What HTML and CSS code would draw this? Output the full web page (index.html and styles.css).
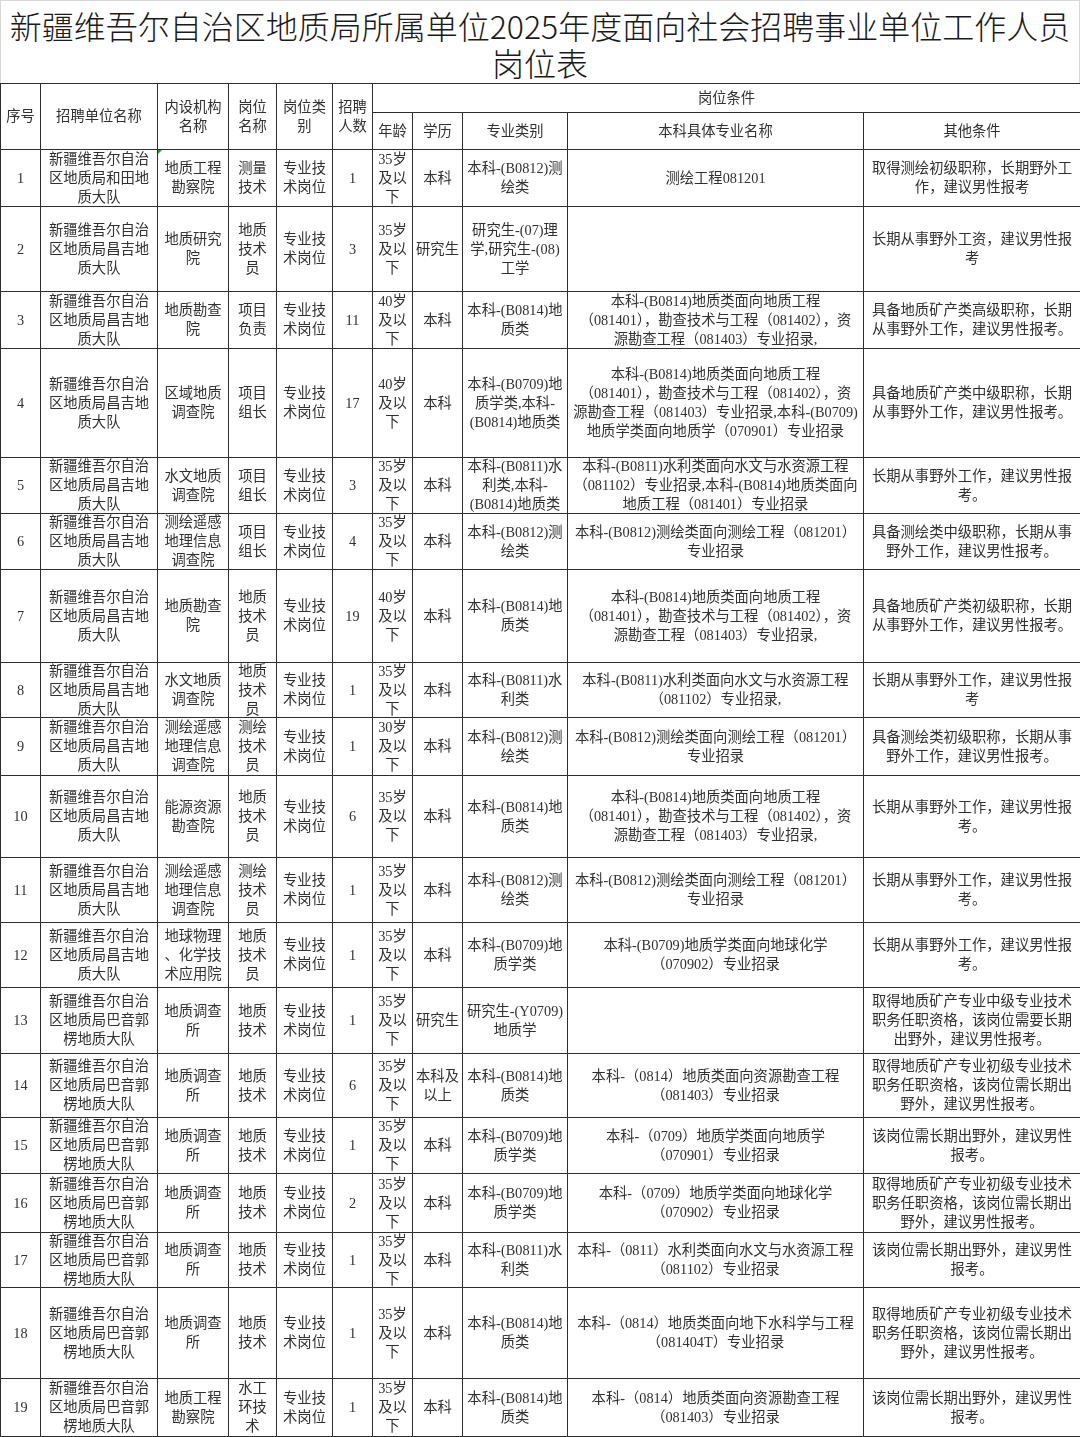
FILE: index.html
```html
<!DOCTYPE html>
<html lang="zh-CN">
<head>
<meta charset="utf-8">
<title>岗位表</title>
<link rel="stylesheet" href="styles.css">
</head>
<body>
<div class="title">新疆维吾尔自治区地质局所属单位2025年度面向社会招聘事业单位工作人员<br>岗位表</div>
<table class="t">
<colgroup>
<col class="w40"><col class="w117"><col class="w71"><col class="w48"><col class="w56"><col class="w40"><col class="w40"><col class="w50"><col class="w105"><col class="w296"><col class="w217">
</colgroup>
<thead>
<tr class="hd1">
<th rowspan="2"><div class="hc"><p>序号</p></div></th>
<th rowspan="2"><div class="hc"><p>招聘单位名称</p></div></th>
<th rowspan="2"><div class="hc"><p>内设机构<br>名称</p></div></th>
<th rowspan="2"><div class="hc"><p>岗位<br>名称</p></div></th>
<th rowspan="2"><div class="hc"><p>岗位类<br>别</p></div></th>
<th rowspan="2"><div class="hc"><p>招聘<br>人数</p></div></th>
<th colspan="5"><div><p>岗位条件</p></div></th>
</tr>
<tr class="hd2">
<th><div><p>年龄</p></div></th>
<th><div><p>学历</p></div></th>
<th><div><p>专业类别</p></div></th>
<th><div><p>本科具体专业名称</p></div></th>
<th><div><p>其他条件</p></div></th>
</tr>
</thead>
<tbody>
<tr class="r57">
<td><div><p>1</p></div></td>
<td><div><p>新疆维吾尔自治<br>区地质局和田地<br>质大队</p></div></td>
<td><div class="marked"><i class="mark"></i><p>地质工程<br>勘察院</p></div></td>
<td><div><p>测量<br>技术</p></div></td>
<td><div><p>专业技<br>术岗位</p></div></td>
<td><div><p>1</p></div></td>
<td><div><p>35岁<br>及以<br>下</p></div></td>
<td><div><p>本科</p></div></td>
<td><div><p>本科-(B0812)测<br>绘类</p></div></td>
<td><div><p>测绘工程081201</p></div></td>
<td><div><p>取得测绘初级职称，长期野外工<br>作，建议男性报考</p></div></td>
</tr>
<tr class="r85">
<td><div><p>2</p></div></td>
<td><div><p>新疆维吾尔自治<br>区地质局昌吉地<br>质大队</p></div></td>
<td><div><p>地质研究<br>院</p></div></td>
<td><div><p>地质<br>技术<br>员</p></div></td>
<td><div><p>专业技<br>术岗位</p></div></td>
<td><div><p>3</p></div></td>
<td><div><p>35岁<br>及以<br>下</p></div></td>
<td><div><p>研究生</p></div></td>
<td><div><p>研究生-(07)理<br>学,研究生-(08)<br>工学</p></div></td>
<td><div><p></p></div></td>
<td><div><p>长期从事野外工资，建议男性报<br>考</p></div></td>
</tr>
<tr class="r57">
<td><div><p>3</p></div></td>
<td><div><p>新疆维吾尔自治<br>区地质局昌吉地<br>质大队</p></div></td>
<td><div><p>地质勘查<br>院</p></div></td>
<td><div><p>项目<br>负责</p></div></td>
<td><div><p>专业技<br>术岗位</p></div></td>
<td><div><p>11</p></div></td>
<td><div><p>40岁<br>及以<br>下</p></div></td>
<td><div><p>本科</p></div></td>
<td><div><p>本科-(B0814)地<br>质类</p></div></td>
<td><div><p>本科-(B0814)地质类面向地质工程<br>（081401），勘查技术与工程（081402），资<br>源勘查工程（081403）专业招录,</p></div></td>
<td><div><p>具备地质矿产类高级职称，长期<br>从事野外工作，建议男性报考。</p></div></td>
</tr>
<tr class="r109">
<td><div><p>4</p></div></td>
<td><div><p>新疆维吾尔自治<br>区地质局昌吉地<br>质大队</p></div></td>
<td><div><p>区域地质<br>调查院</p></div></td>
<td><div><p>项目<br>组长</p></div></td>
<td><div><p>专业技<br>术岗位</p></div></td>
<td><div><p>17</p></div></td>
<td><div><p>40岁<br>及以<br>下</p></div></td>
<td><div><p>本科</p></div></td>
<td><div><p>本科-(B0709)地<br>质学类,本科-<br>(B0814)地质类</p></div></td>
<td><div><p>本科-(B0814)地质类面向地质工程<br>（081401），勘查技术与工程（081402），资<br>源勘查工程（081403）专业招录,本科-(B0709)<br>地质学类面向地质学（070901）专业招录</p></div></td>
<td><div><p>具备地质矿产类中级职称，长期<br>从事野外工作，建议男性报考。</p></div></td>
</tr>
<tr class="r56">
<td><div><p>5</p></div></td>
<td><div><p>新疆维吾尔自治<br>区地质局昌吉地<br>质大队</p></div></td>
<td><div><p>水文地质<br>调查院</p></div></td>
<td><div><p>项目<br>组长</p></div></td>
<td><div><p>专业技<br>术岗位</p></div></td>
<td><div><p>3</p></div></td>
<td><div><p>35岁<br>及以<br>下</p></div></td>
<td><div><p>本科</p></div></td>
<td><div><p>本科-(B0811)水<br>利类,本科-<br>(B0814)地质类</p></div></td>
<td><div><p>本科-(B0811)水利类面向水文与水资源工程<br>（081102）专业招录,本科-(B0814)地质类面向<br>地质工程（081401）专业招录</p></div></td>
<td><div><p>长期从事野外工作，建议男性报<br>考。</p></div></td>
</tr>
<tr class="r56">
<td><div><p>6</p></div></td>
<td><div><p>新疆维吾尔自治<br>区地质局昌吉地<br>质大队</p></div></td>
<td><div><p>测绘遥感<br>地理信息<br>调查院</p></div></td>
<td><div><p>项目<br>组长</p></div></td>
<td><div><p>专业技<br>术岗位</p></div></td>
<td><div><p>4</p></div></td>
<td><div><p>35岁<br>及以<br>下</p></div></td>
<td><div><p>本科</p></div></td>
<td><div><p>本科-(B0812)测<br>绘类</p></div></td>
<td><div><p>本科-(B0812)测绘类面向测绘工程（081201）<br>专业招录</p></div></td>
<td><div><p>具备测绘类中级职称，长期从事<br>野外工作，建议男性报考。</p></div></td>
</tr>
<tr class="r93">
<td><div><p>7</p></div></td>
<td><div><p>新疆维吾尔自治<br>区地质局昌吉地<br>质大队</p></div></td>
<td><div><p>地质勘查<br>院</p></div></td>
<td><div><p>地质<br>技术<br>员</p></div></td>
<td><div><p>专业技<br>术岗位</p></div></td>
<td><div><p>19</p></div></td>
<td><div><p>40岁<br>及以<br>下</p></div></td>
<td><div><p>本科</p></div></td>
<td><div><p>本科-(B0814)地<br>质类</p></div></td>
<td><div><p>本科-(B0814)地质类面向地质工程<br>（081401），勘查技术与工程（081402），资<br>源勘查工程（081403）专业招录,</p></div></td>
<td><div><p>具备地质矿产类初级职称，长期<br>从事野外工作，建议男性报考。</p></div></td>
</tr>
<tr class="r55">
<td><div><p>8</p></div></td>
<td><div><p>新疆维吾尔自治<br>区地质局昌吉地<br>质大队</p></div></td>
<td><div><p>水文地质<br>调查院</p></div></td>
<td><div><p>地质<br>技术<br>员</p></div></td>
<td><div><p>专业技<br>术岗位</p></div></td>
<td><div><p>1</p></div></td>
<td><div><p>35岁<br>及以<br>下</p></div></td>
<td><div><p>本科</p></div></td>
<td><div><p>本科-(B0811)水<br>利类</p></div></td>
<td><div><p>本科-(B0811)水利类面向水文与水资源工程<br>（081102）专业招录,</p></div></td>
<td><div><p>长期从事野外工作，建议男性报<br>考</p></div></td>
</tr>
<tr class="r58">
<td><div><p>9</p></div></td>
<td><div><p>新疆维吾尔自治<br>区地质局昌吉地<br>质大队</p></div></td>
<td><div><p>测绘遥感<br>地理信息<br>调查院</p></div></td>
<td><div><p>测绘<br>技术<br>员</p></div></td>
<td><div><p>专业技<br>术岗位</p></div></td>
<td><div><p>1</p></div></td>
<td><div><p>30岁<br>及以<br>下</p></div></td>
<td><div><p>本科</p></div></td>
<td><div><p>本科-(B0812)测<br>绘类</p></div></td>
<td><div><p>本科-(B0812)测绘类面向测绘工程（081201）<br>专业招录</p></div></td>
<td><div><p>具备测绘类初级职称，长期从事<br>野外工作，建议男性报考。</p></div></td>
</tr>
<tr class="r82">
<td><div><p>10</p></div></td>
<td><div><p>新疆维吾尔自治<br>区地质局昌吉地<br>质大队</p></div></td>
<td><div><p>能源资源<br>勘查院</p></div></td>
<td><div><p>地质<br>技术<br>员</p></div></td>
<td><div><p>专业技<br>术岗位</p></div></td>
<td><div><p>6</p></div></td>
<td><div><p>35岁<br>及以<br>下</p></div></td>
<td><div><p>本科</p></div></td>
<td><div><p>本科-(B0814)地<br>质类</p></div></td>
<td><div><p>本科-(B0814)地质类面向地质工程<br>（081401），勘查技术与工程（081402），资<br>源勘查工程（081403）专业招录,</p></div></td>
<td><div><p>长期从事野外工作，建议男性报<br>考。</p></div></td>
</tr>
<tr class="r65">
<td><div><p>11</p></div></td>
<td><div><p>新疆维吾尔自治<br>区地质局昌吉地<br>质大队</p></div></td>
<td><div><p>测绘遥感<br>地理信息<br>调查院</p></div></td>
<td><div><p>测绘<br>技术<br>员</p></div></td>
<td><div><p>专业技<br>术岗位</p></div></td>
<td><div><p>1</p></div></td>
<td><div><p>35岁<br>及以<br>下</p></div></td>
<td><div><p>本科</p></div></td>
<td><div><p>本科-(B0812)测<br>绘类</p></div></td>
<td><div><p>本科-(B0812)测绘类面向测绘工程（081201）<br>专业招录</p></div></td>
<td><div><p>长期从事野外工作，建议男性报<br>考。</p></div></td>
</tr>
<tr class="r65">
<td><div><p>12</p></div></td>
<td><div><p>新疆维吾尔自治<br>区地质局昌吉地<br>质大队</p></div></td>
<td><div><p>地球物理<br>、化学技<br>术应用院</p></div></td>
<td><div><p>地质<br>技术<br>员</p></div></td>
<td><div><p>专业技<br>术岗位</p></div></td>
<td><div><p>1</p></div></td>
<td><div><p>35岁<br>及以<br>下</p></div></td>
<td><div><p>本科</p></div></td>
<td><div><p>本科-(B0709)地<br>质学类</p></div></td>
<td><div><p>本科-(B0709)地质学类面向地球化学<br>（070902）专业招录</p></div></td>
<td><div><p>长期从事野外工作，建议男性报<br>考。</p></div></td>
</tr>
<tr class="r66">
<td><div><p>13</p></div></td>
<td><div><p>新疆维吾尔自治<br>区地质局巴音郭<br>楞地质大队</p></div></td>
<td><div><p>地质调查<br>所</p></div></td>
<td><div><p>地质<br>技术</p></div></td>
<td><div><p>专业技<br>术岗位</p></div></td>
<td><div><p>1</p></div></td>
<td><div><p>35岁<br>及以<br>下</p></div></td>
<td><div><p>研究生</p></div></td>
<td><div><p>研究生-(Y0709)<br>地质学</p></div></td>
<td><div><p></p></div></td>
<td><div><p>取得地质矿产专业中级专业技术<br>职务任职资格，该岗位需要长期<br>出野外，建议男性报考。</p></div></td>
</tr>
<tr class="r64">
<td><div><p>14</p></div></td>
<td><div><p>新疆维吾尔自治<br>区地质局巴音郭<br>楞地质大队</p></div></td>
<td><div><p>地质调查<br>所</p></div></td>
<td><div><p>地质<br>技术</p></div></td>
<td><div><p>专业技<br>术岗位</p></div></td>
<td><div><p>6</p></div></td>
<td><div><p>35岁<br>及以<br>下</p></div></td>
<td><div><p>本科及<br>以上</p></div></td>
<td><div><p>本科-(B0814)地<br>质类</p></div></td>
<td><div><p>本科-（0814）地质类面向资源勘查工程<br>（081403）专业招录</p></div></td>
<td><div><p>取得地质矿产专业初级专业技术<br>职务任职资格，该岗位需长期出<br>野外，建议男性报考。</p></div></td>
</tr>
<tr class="r56">
<td><div><p>15</p></div></td>
<td><div><p>新疆维吾尔自治<br>区地质局巴音郭<br>楞地质大队</p></div></td>
<td><div><p>地质调查<br>所</p></div></td>
<td><div><p>地质<br>技术</p></div></td>
<td><div><p>专业技<br>术岗位</p></div></td>
<td><div><p>1</p></div></td>
<td><div><p>35岁<br>及以<br>下</p></div></td>
<td><div><p>本科</p></div></td>
<td><div><p>本科-(B0709)地<br>质学类</p></div></td>
<td><div><p>本科-（0709）地质学类面向地质学<br>（070901）专业招录</p></div></td>
<td><div><p>该岗位需长期出野外，建议男性<br>报考。</p></div></td>
</tr>
<tr class="r59">
<td><div><p>16</p></div></td>
<td><div><p>新疆维吾尔自治<br>区地质局巴音郭<br>楞地质大队</p></div></td>
<td><div><p>地质调查<br>所</p></div></td>
<td><div><p>地质<br>技术</p></div></td>
<td><div><p>专业技<br>术岗位</p></div></td>
<td><div><p>2</p></div></td>
<td><div><p>35岁<br>及以<br>下</p></div></td>
<td><div><p>本科</p></div></td>
<td><div><p>本科-(B0709)地<br>质学类</p></div></td>
<td><div><p>本科-（0709）地质学类面向地球化学<br>（070902）专业招录</p></div></td>
<td><div><p>取得地质矿产专业初级专业技术<br>职务任职资格，该岗位需长期出<br>野外，建议男性报考。</p></div></td>
</tr>
<tr class="r55">
<td><div><p>17</p></div></td>
<td><div><p>新疆维吾尔自治<br>区地质局巴音郭<br>楞地质大队</p></div></td>
<td><div><p>地质调查<br>所</p></div></td>
<td><div><p>地质<br>技术</p></div></td>
<td><div><p>专业技<br>术岗位</p></div></td>
<td><div><p>1</p></div></td>
<td><div><p>35岁<br>及以<br>下</p></div></td>
<td><div><p>本科</p></div></td>
<td><div><p>本科-(B0811)水<br>利类</p></div></td>
<td><div><p>本科-（0811）水利类面向水文与水资源工程<br>（081102）专业招录</p></div></td>
<td><div><p>该岗位需长期出野外，建议男性<br>报考。</p></div></td>
</tr>
<tr class="r91">
<td><div><p>18</p></div></td>
<td><div><p>新疆维吾尔自治<br>区地质局巴音郭<br>楞地质大队</p></div></td>
<td><div><p>地质调查<br>所</p></div></td>
<td><div><p>地质<br>技术</p></div></td>
<td><div><p>专业技<br>术岗位</p></div></td>
<td><div><p>1</p></div></td>
<td><div><p>35岁<br>及以<br>下</p></div></td>
<td><div><p>本科</p></div></td>
<td><div><p>本科-(B0814)地<br>质类</p></div></td>
<td><div><p>本科-（0814）地质类面向地下水科学与工程<br>（081404T）专业招录</p></div></td>
<td><div><p>取得地质矿产专业初级专业技术<br>职务任职资格，该岗位需长期出<br>野外，建议男性报考。</p></div></td>
</tr>
<tr class="r58">
<td><div><p>19</p></div></td>
<td><div><p>新疆维吾尔自治<br>区地质局巴音郭<br>楞地质大队</p></div></td>
<td><div><p>地质工程<br>勘察院</p></div></td>
<td><div><p>水工<br>环技<br>术</p></div></td>
<td><div><p>专业技<br>术岗位</p></div></td>
<td><div><p>1</p></div></td>
<td><div><p>35岁<br>及以<br>下</p></div></td>
<td><div><p>本科</p></div></td>
<td><div><p>本科-(B0814)地<br>质类</p></div></td>
<td><div><p>本科-（0814）地质类面向资源勘查工程<br>（081403）专业招录</p></div></td>
<td><div><p>该岗位需长期出野外，建议男性<br>报考。</p></div></td>
</tr>
</tbody>
</table>
</body>
</html>
```

FILE: styles.css
```css
html, body {
  margin: 0;
  padding: 0;
  background: #ffffff;
}
body {
  width: 1080px;
  color: #303030;
  font-family: "Liberation Serif", "Noto Sans CJK SC", serif;
}
.title {
  box-sizing: border-box;
  height: 83px;
  padding-top: 6px;
  font-family: "Noto Sans CJK SC", sans-serif;
  font-weight: 300;
  font-size: 32px;
  line-height: 37px;
  text-align: center;
  color: #1a1a1a;
  border: 1px solid #d8d8d8;
  border-bottom: none;
  white-space: nowrap;
}
.t {
  width: 1080px;
  table-layout: fixed;
  border-collapse: collapse;
  font-size: 14.3px;
  line-height: 19px;
}
.w40 { width: 40px; }
.w117 { width: 117px; }
.w71 { width: 71px; }
.w48 { width: 48px; }
.w56 { width: 56px; }
.w50 { width: 50px; }
.w105 { width: 105px; }
.w296 { width: 296px; }
.w217 { width: 217px; }
.t th, .t td {
  border: 1px solid #2e2e2e;
  padding: 0;
  font-weight: normal;
  vertical-align: middle;
}
.t th > div, .t td > div {
  display: flex;
  align-items: center;
  justify-content: center;
  overflow: hidden;
  position: relative;
}
.t p {
  margin: 0;
  text-align: center;
  white-space: nowrap;
  filter: grayscale(1);
}
.hd1 th > div { height: 28px; }
.hd2 th > div { height: 36px; }
.hd1 th > div.hc { height: 65px; }
.r55 td > div { height: 54px; }
.r56 td > div { height: 55px; }
.r57 td > div { height: 56px; }
.r58 td > div { height: 57px; }
.r59 td > div { height: 58px; }
.r64 td > div { height: 63px; }
.r65 td > div { height: 64px; }
.r66 td > div { height: 65px; }
.r82 td > div { height: 81px; }
.r85 td > div { height: 84px; }
.r91 td > div { height: 90px; }
.r93 td > div { height: 92px; }
.r109 td > div { height: 108px; }
.mark {
  position: absolute;
  top: 0;
  left: 0;
  width: 0;
  height: 0;
  border-top: 4px solid #1f9a2a;
  border-right: 4px solid transparent;
}
```
